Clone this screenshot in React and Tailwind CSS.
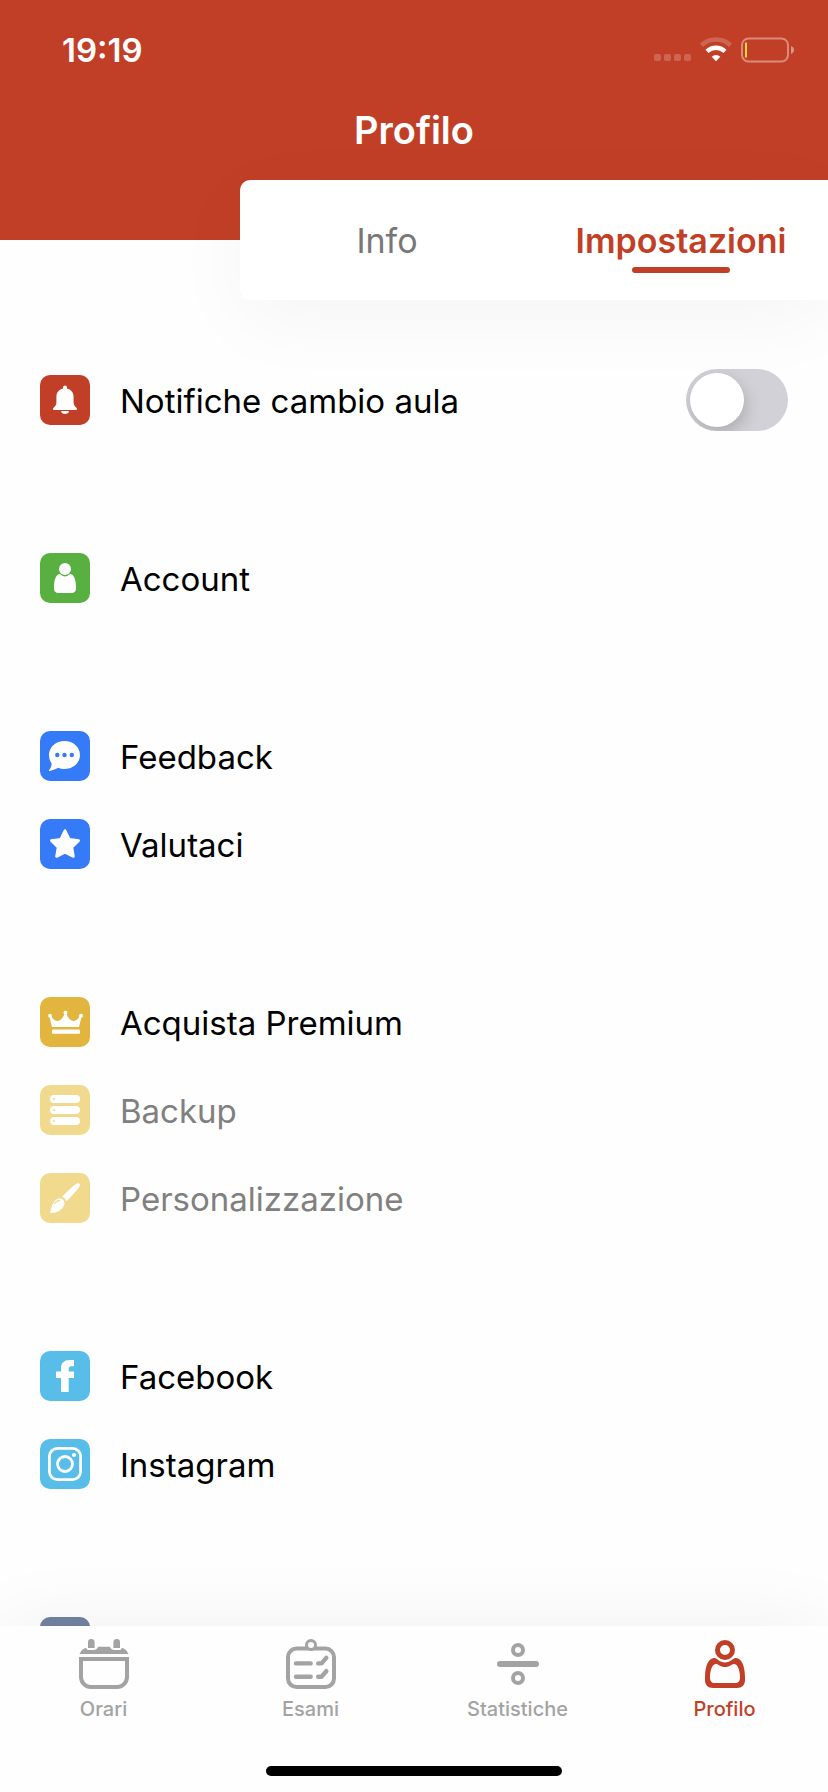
import { useState } from "react";

const BellIcon = () => (
  <>
    <path d="M23 13.5v-1a2 2 0 0 1 4 0v1c4 .9 6.600 4 6.600 8.600v5.400c0 2.400 1 3.500 2.600 5.100l.6.700c.5.700.2 1.700-.8 1.700H14c-1 0-1.300-1-.8-1.700l.6-.7c1.600-1.600 2.600-2.700 2.600-5.100v-5.400c0-4.600 2.600-7.700 6.600-8.600z" />
    <path d="M21 36h8c-.3 1.800-1.900 3-4 3s-3.700-1.200-4-3z" />
  </>
);

const PersonIcon = () => (
  <>
    <circle cx="25" cy="16" r="6" />
    <path d="M18.600 21.200c.9-.5 1.700-.1 2.400.6 2.400 2.300 5.600 2.300 8 0 .7-.7 1.500-1.100 2.400-.6C34.600 22.800 36 28 36 34v1.500c0 2.900-1.600 4.500-4.500 4.500h-13c-2.900 0-4.500-1.600-4.500-4.500V34c0-6 1.400-11.200 4.600-12.800z" />
  </>
);

const ChatIcon = () => (
  <path
    fillRule="evenodd"
    d="M24.500 10C33 10 40 16 40 24s-7 14-15.500 14c-2.300 0-4.500-.4-6.500-1.200-2 1.200-5 2.600-8.200 3.200-.8.100-1.100-.5-.6-1.100 1.800-2.100 2.600-4.500 2.300-6.700C9.900 29.900 9 27.100 9 24c0-8 7-14 15.500-14zM17.300 21.800a2.200 2.200 0 1 0 0 4.400 2.200 2.200 0 0 0 0-4.400zm7.200 0a2.200 2.200 0 1 0 0 4.400 2.200 2.200 0 0 0 0-4.400zm7.300 0a2.200 2.200 0 1 0 0 4.400 2.200 2.200 0 0 0 0-4.400z"
  />
);

const StarIcon = () => (
  <path
    d="M25 11.500l4.300 8.800 9.400 1.200-6.800 6.700 1.600 9.300-8.500-4.200-8.500 4.200 1.600-9.300-6.800-6.700 9.400-1.200z"
    stroke="currentColor"
    strokeWidth="2.600"
    strokeLinejoin="round"
  />
);

const CrownIcon = () => (
  <>
    <circle cx="10" cy="18.700" r="2" />
    <circle cx="25.500" cy="15.800" r="2" />
    <circle cx="41" cy="18.700" r="2" />
    <path d="M9.400 19.500l1.600-.7c2.200 3.500 4 5.200 6.400 5.200 3.600 0 5.600-3.600 7.300-7.500h1.600c1.700 3.900 3.700 7.500 7.300 7.500 2.400 0 4.200-1.700 6.400-5.200l1.600.7L39 30H12z" />
    <rect x="12" y="32.500" width="28" height="4.200" rx="1" />
  </>
);

const ServerIcon = () => (
  <path
    fillRule="evenodd"
    d="M14 10h22a4 4 0 0 1 0 8H14a4 4 0 0 1 0-8zm0 3a1 1 0 1 0 0 2 1 1 0 0 0 0-2zM14 21h22a4 4 0 0 1 0 8H14a4 4 0 0 1 0-8zm0 3a1 1 0 1 0 0 2 1 1 0 0 0 0-2zM14 32h22a4 4 0 0 1 0 8H14a4 4 0 0 1 0-8zm0 3a1 1 0 1 0 0 2 1 1 0 0 0 0-2z"
  />
);

const BrushIcon = () => (
  <>
    <path d="M36.800 10.600c2-1.400 4.200.8 2.800 2.800-3.200 4.600-8 10-13.500 15.100-.4-2.300-1.700-4-4-4.700 5-5.400 10.300-10.200 14.700-13.200z" />
    <path d="M12.500 31.500c1.600-3.600 4.400-5.900 7.500-6.200 2.700.4 4.400 2.200 4.500 4.700-.6 5.300-5.500 10-13.300 10-1 0-1.500-.7-1-1.500 1.300-1.900.9-3.700 2.300-7z" />
    <path d="M14.500 30.800c1.200-2.100 3-3.300 5.200-3.100" fill="none" stroke="#f1d98e" strokeWidth="1.200" strokeLinecap="round" />
  </>
);

const FacebookIcon = () => (
  <path d="M34 9v6.200h-2.500c-2 0-2.800.9-2.800 2.700v2.700H34V27h-5.300v14H21V27h-5v-6.400h5v-3.400C21 12 24.300 9 29.600 9z" />
);

const InstagramIcon = () => (
  <>
    <g fill="none" stroke="currentColor" strokeWidth="2.800">
      <rect x="9.400" y="9.400" width="31.200" height="31.200" rx="8" />
      <circle cx="25" cy="25" r="7.500" />
    </g>
    <circle cx="34" cy="16" r="2.100" />
  </>
);

const groups = [
  [{ label: "Notifiche cambio aula", tile: "bg-[#c23f27]", Icon: BellIcon, toggle: true }],
  [{ label: "Account", tile: "bg-[#58b040]", Icon: PersonIcon }],
  [
    { label: "Feedback", tile: "bg-[#357af6]", Icon: ChatIcon },
    { label: "Valutaci", tile: "bg-[#357af6]", Icon: StarIcon },
  ],
  [
    { label: "Acquista Premium", tile: "bg-[#e2b53e]", Icon: CrownIcon },
    { label: "Backup", tile: "bg-[#f1d98e]", Icon: ServerIcon, disabled: true },
    { label: "Personalizzazione", tile: "bg-[#f1d98e]", Icon: BrushIcon, disabled: true },
  ],
  [
    { label: "Facebook", tile: "bg-[#58bde8]", Icon: FacebookIcon },
    { label: "Instagram", tile: "bg-[#58bde8]", Icon: InstagramIcon },
  ],
  [{ tile: "bg-[#7283a1]" }],
];

function Tile({ color, Icon }) {
  return (
    <span className={`size-[50px] shrink-0 rounded-[10px] text-white ${color}`}>
      {Icon && (
        <svg viewBox="0 0 50 50" className="size-full" fill="currentColor" aria-hidden="true">
          <Icon />
        </svg>
      )}
    </span>
  );
}

function Row({ item }) {
  const [on, setOn] = useState(false);
  const layout = "flex h-[88px] w-full items-center gap-[30px] px-10 text-left text-[33px] leading-10";
  if (item.toggle) {
    return (
      <label className={`${layout} text-black`}>
        <Tile color={item.tile} Icon={item.Icon} />
        <span className="flex-1 pt-0.5">{item.label}</span>
        <input
          type="checkbox"
          role="switch"
          checked={on}
          onChange={(e) => setOn(e.target.checked)}
          className="flex h-[62px] w-[102px] shrink-0 appearance-none items-center overflow-hidden rounded-full bg-[#d2d1d7] p-1 before:size-[54px] before:rounded-full before:bg-white before:shadow-[2px_6px_16px_rgba(0,0,0,0.18)] checked:justify-end checked:bg-[#34c759]"
        />
      </label>
    );
  }
  return (
    <button type="button" disabled={item.disabled} className={`${layout} text-black disabled:text-[#808080]`}>
      <Tile color={item.tile} Icon={item.Icon} />
      <span className="pt-0.5">{item.label}</span>
    </button>
  );
}

const CalendarIcon = () => (
  <>
    <path d="M2 20h46v18a10 10 0 0 1-10 10H12A10 10 0 0 1 2 38z" fill="none" stroke="currentColor" strokeWidth="4" />
    <path d="M.5 15C1.700 12 4 9.500 7 8.700 7.500 10.200 8.500 11 10 11h4.500c2 0 3.200-.8 4-2.200.3-.6.700-1 1.500-1h10c.8 0 1.200.4 1.500 1 .8 1.400 2 2.200 4 2.200H40c1.500 0 2.500-.8 3-2.300 3 .8 5.300 3.300 6.500 6.300z" />
    <path d="M9 3.300a3.300 3.300 0 0 1 6.600 0V9H9zM34.400 3.300a3.300 3.300 0 0 1 6.600 0V9h-6.600z" />
  </>
);

const ExamsIcon = () => (
  <g fill="none" stroke="currentColor" strokeLinecap="round" strokeLinejoin="round">
    <rect x="2" y="9.600" width="46" height="38.400" rx="8.500" strokeWidth="4" />
    <circle cx="25" cy="6" r="4.500" fill="#fefefe" strokeWidth="3" />
    <path d="M10 24.400h14.700M10 37.700h14.700M32.200 24.400h3.300l4.800-5.500M32.200 37.700h3.300l4.800-5.500" strokeWidth="4.400" />
  </g>
);

const DivideIcon = () => (
  <g fill="none" stroke="currentColor">
    <circle cx="25" cy="11" r="5" strokeWidth="4" />
    <circle cx="25" cy="39" r="5" strokeWidth="4" />
    <path d="M7 25h36" strokeWidth="6" strokeLinecap="round" />
  </g>
);

const ProfileIcon = () => (
  <>
    <circle cx="25" cy="11" r="7.500" fill="none" stroke="currentColor" strokeWidth="5" />
    <path
      fillRule="evenodd"
      d="M14 19c1.500 0 2.500.7 3.500 1.600 4.800 3.900 10.200 3.900 15 0 1-.9 2-1.600 3.500-1.600 5.500 0 9 8.500 9 19v3c0 5-3 8-8 8H13c-5 0-8-3-8-8v-3c0-10.500 3.500-19 9-19zM16.500 25C12.500 24.500 10 31 10 38.500 10 42 11.500 44 15 44h20c3.500 0 5-2 5-5.500 0-7.500-2.500-14-6.500-13.500-1 .1-1.700.6-2.500 1.200-3.800 2.400-8.200 2.400-12 0-.8-.6-1.500-1.100-2.500-1.200z"
    />
  </>
);

const tabs = [
  { label: "Orari", Icon: CalendarIcon },
  { label: "Esami", Icon: ExamsIcon },
  { label: "Statistiche", Icon: DivideIcon },
  { label: "Profilo", Icon: ProfileIcon, active: true },
];

function StatusBar() {
  return (
    <div className="flex h-[100px] items-center justify-between pr-[34px] pl-[62px]">
      <time className="text-[33px] leading-10 font-semibold">19:19</time>
      <div className="flex items-center gap-2">
        <svg className="h-[26px] w-[38px]" viewBox="0 0 38 26" fill="#fff" fillOpacity="0.200" aria-hidden="true">
          <rect x="0" y="17" width="7" height="7" rx="2" />
          <rect x="10" y="17" width="7" height="7" rx="2" />
          <rect x="20" y="17" width="7" height="7" rx="2" />
          <rect x="30" y="17" width="7" height="7" rx="2" />
        </svg>
        <svg className="h-[26px] w-8" viewBox="0 0 32 26" fill="none" stroke="#fff" aria-hidden="true">
          <path d="M1.500 8.300a21 21 0 0 1 29 0" strokeWidth="4.500" strokeOpacity="0.200" />
          <path d="M7 14.300a13 13 0 0 1 18 0" strokeWidth="4.500" />
          <path d="M16 24.200l-4.300-4.400a6.300 6.300 0 0 1 8.600 0z" fill="#fff" stroke="none" />
        </svg>
        <svg className="h-[26px] w-[54px]" viewBox="0 0 54 26" aria-hidden="true">
          <rect x="2" y="1.500" width="46" height="23" rx="6.500" fill="none" stroke="#fff" strokeOpacity="0.400" strokeWidth="2" />
          <rect x="5" y="5.500" width="2" height="15" rx="0.500" fill="#ffd93b" />
          <path d="M51 9c2 .8 3 2.200 3 4s-1 3.200-3 4z" fill="#fff" fillOpacity="0.450" />
        </svg>
      </div>
    </div>
  );
}

export default function App() {
  return (
    <div className="flex h-screen flex-col overflow-hidden bg-[#fefefe] font-['Inter','Liberation_Sans',sans-serif]">
      <header className="shrink-0 bg-[#c23f27] pb-20 text-white">
        <StatusBar />
        <h1 className="text-center text-[38px] leading-[60px] font-semibold">Profilo</h1>
      </header>

      <nav className="relative z-10 -mt-[60px] ml-60 grid h-[120px] shrink-0 grid-cols-2 rounded-l-[10px] bg-white text-[34px] leading-10 shadow-[0_20px_80px_rgba(20,20,60,0.04)]">
        <button type="button" className="pt-0.5 text-[#777777]">
          Info
        </button>
        <button type="button" className="relative pt-0.5 font-semibold text-[#c23f27]">
          Impostazioni
          <span className="absolute inset-x-0 bottom-[27px] mx-auto h-[6px] w-[98px] rounded-full bg-[#c23f27]" />
        </button>
      </nav>

      <main className="flex min-h-0 flex-1 flex-col gap-[90px] overflow-y-auto pt-14 [scrollbar-width:none]">
        {groups.map((items, i) => (
          <section key={i} className="shrink-0">
            {items.map((item, j) => (
              <Row key={j} item={item} />
            ))}
          </section>
        ))}
      </main>

      <footer className="relative z-10 shrink-0 bg-[#fefefe] pt-[13px] pb-4 shadow-[0_0_80px_rgba(20,20,30,0.06)]">
        <nav className="grid grid-cols-4">
          {tabs.map(({ label, Icon, active }) => (
            <a
              key={label}
              href="#"
              aria-current={active ? "page" : undefined}
              className={`flex flex-col items-center gap-2 text-[20px] leading-6 font-medium ${active ? "text-[#c23f27]" : "text-[#a3a3a3]"}`}
            >
              <svg viewBox="0 0 50 50" className="size-[50px]" fill="currentColor" aria-hidden="true">
                <Icon />
              </svg>
              {label}
            </a>
          ))}
        </nav>
        <div className="mx-auto mt-[45px] h-[10px] w-[296px] rounded-full bg-black" />
      </footer>
    </div>
  );
}
